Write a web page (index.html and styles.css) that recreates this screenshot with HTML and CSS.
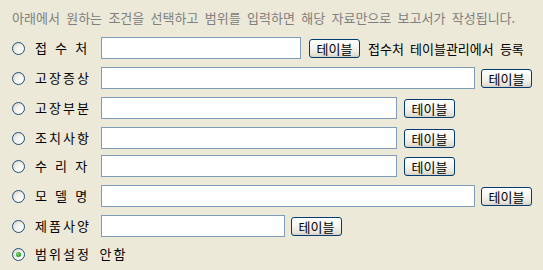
FILE: index.html
```html
<!DOCTYPE html>
<html lang="ko">
<head>
<meta charset="utf-8">
<title>범위 설정</title>
<link rel="stylesheet" href="styles.css">
</head>
<body>
<div class="page">
  <p class="hint">아래에서 원하는 조건을 선택하고 범위를 입력하면 해당 자료만으로 보고서가 작성됩니다.</p>
  <div class="rows">
    <div class="row">
      <input class="radio" type="radio" name="range">
      <span class="label spaced">접 수 처</span>
      <input class="field w200" type="text">
      <button class="btn" type="button">테이블</button>
      <span class="note">접수처 테이블관리에서 등록</span>
    </div>
    <div class="row">
      <input class="radio" type="radio" name="range">
      <span class="label">고장증상</span>
      <input class="field w374" type="text">
      <button class="btn" type="button">테이블</button>
    </div>
    <div class="row">
      <input class="radio" type="radio" name="range">
      <span class="label">고장부분</span>
      <input class="field w296" type="text">
      <button class="btn" type="button">테이블</button>
    </div>
    <div class="row">
      <input class="radio" type="radio" name="range">
      <span class="label">조치사항</span>
      <input class="field w296" type="text">
      <button class="btn" type="button">테이블</button>
    </div>
    <div class="row tight">
      <input class="radio" type="radio" name="range">
      <span class="label spaced">수 리 자</span>
      <input class="field w296" type="text">
      <button class="btn" type="button">테이블</button>
    </div>
    <div class="row">
      <input class="radio" type="radio" name="range">
      <span class="label spaced">모 델 명</span>
      <input class="field w374" type="text">
      <button class="btn" type="button">테이블</button>
    </div>
    <div class="row">
      <input class="radio" type="radio" name="range">
      <span class="label">제품사양</span>
      <input class="field w184" type="text">
      <button class="btn" type="button">테이블</button>
    </div>
    <div class="row tight">
      <input class="radio" type="radio" name="range" checked>
      <span class="label wide">범위설정 안함</span>
    </div>
  </div>
</div>
</body>
</html>
```
FILE: styles.css
```css
html, body {
  margin: 0;
  padding: 0;
  background: #ece9d8;
}

body {
  font-family: "Noto Sans CJK KR", "Noto Sans", sans-serif;
  font-size: 13px;
  color: #000;
}

.page {
  padding: 8px 0 0 12px;
}

.hint {
  margin: 0 0 9px 0;
  height: 20px;
  line-height: 20px;
  color: #808080;
  word-spacing: 2.7px;
  white-space: nowrap;
}

.rows {
  display: flex;
  flex-direction: column;
  gap: 8px;
}

.row {
  display: flex;
  align-items: center;
  height: 22px;
}

.row.tight {
  margin-top: -2px;
}

.radio {
  appearance: none;
  -webkit-appearance: none;
  margin: 0 10px 0 0;
  width: 13px;
  height: 13px;
  flex: none;
  box-sizing: border-box;
  border: 1px solid #1c5180;
  border-radius: 50%;
  background: radial-gradient(circle at 70% 70%, #ffffff 0%, #f4f3ee 40%, #d4d1c4 100%);
  position: relative;
}

.radio:checked::after {
  content: "";
  position: absolute;
  left: 3px;
  top: 3px;
  width: 5px;
  height: 5px;
  border-radius: 50%;
  background: radial-gradient(circle at 40% 40%, #8fe08f 0%, #21a121 60%, #1b8f1b 100%);
}

.label {
  width: 66px;
  flex: none;
  letter-spacing: 2px;
  white-space: nowrap;
  line-height: 22px;
}

.label.spaced {
  word-spacing: 0.5px;
}

.label.wide {
  width: auto;
  word-spacing: 3px;
}

.field {
  box-sizing: border-box;
  height: 22px;
  margin: 0 7px 0 0;
  padding: 0 3px;
  border: 1px solid #7f9db9;
  background: #fff;
  font: inherit;
  flex: none;
}

.w200 { width: 200px; margin-right: 8px; }
.w374 { width: 374px; margin-right: 6px; }
.w296 { width: 296px; }
.w184 { width: 184px; margin-right: 6px; }

.btn {
  box-sizing: border-box;
  width: 51px;
  height: 19px;
  margin: 0;
  padding: 0;
  flex: none;
  border: 1px solid #003c74;
  border-radius: 3px;
  background: linear-gradient(#ffffff 0%, #f5f4ef 50%, #e6e3d8 85%, #d6d0c5 100%);
  font: inherit;
  color: #000;
  line-height: 17px;
}

.note {
  margin-left: 8px;
  white-space: nowrap;
  word-spacing: 2.5px;
}
```
